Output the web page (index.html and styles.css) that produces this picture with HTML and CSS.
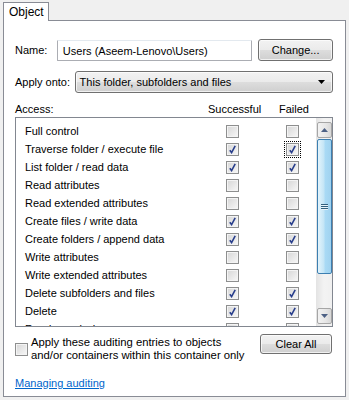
FILE: index.html
```html
<!DOCTYPE html>
<html>
<head>
<meta charset="utf-8">
<link rel="stylesheet" href="styles.css">
</head>
<body>
<div class="tabs"><div class="tab">Object</div></div>
<div class="panel">
  <div class="name-row">
    <span class="label name-label">Name:</span>
    <div class="textbox">Users (Aseem-Lenovo\Users)</div>
    <div class="btn change-btn">Change...</div>
  </div>
  <div class="apply-row">
    <span class="label apply-label">Apply onto:</span>
    <div class="select">
      <span>This folder, subfolders and files</span>
      <svg class="arrow" width="7" height="4" viewBox="0 0 7 4"><path d="M0 0H7L3.5 4Z" fill="#000"/></svg>
    </div>
  </div>
  <div class="access-head">
    <span class="access-label">Access:</span>
    <span class="col-head col-s">Successful</span>
    <span class="col-head col-f">Failed</span>
  </div>
  <div class="listbox">
    <div class="rows">
      <div class="row"><span class="perm">Full control</span><span class="cb"></span><span class="cb"></span></div>
      <div class="row"><span class="perm">Traverse folder / execute file</span><span class="cb on"></span><span class="focus"><span class="cb on"></span></span></div>
      <div class="row"><span class="perm">List folder / read data</span><span class="cb on"></span><span class="cb on"></span></div>
      <div class="row"><span class="perm">Read attributes</span><span class="cb"></span><span class="cb"></span></div>
      <div class="row"><span class="perm">Read extended attributes</span><span class="cb"></span><span class="cb"></span></div>
      <div class="row"><span class="perm">Create files / write data</span><span class="cb on"></span><span class="cb on"></span></div>
      <div class="row"><span class="perm">Create folders / append data</span><span class="cb on"></span><span class="cb on"></span></div>
      <div class="row"><span class="perm">Write attributes</span><span class="cb"></span><span class="cb"></span></div>
      <div class="row"><span class="perm">Write extended attributes</span><span class="cb"></span><span class="cb"></span></div>
      <div class="row"><span class="perm">Delete subfolders and files</span><span class="cb on"></span><span class="cb on"></span></div>
      <div class="row"><span class="perm">Delete</span><span class="cb on"></span><span class="cb on"></span></div>
      <div class="row"><span class="perm">Read permissions</span><span class="cb"></span><span class="cb"></span></div>
    </div>
    <div class="scrollbar">
      <div class="sb-btn"><svg width="7" height="4" viewBox="0 0 7 4"><path d="M0 4H7L3.5 0Z" fill="#4d6185"/></svg></div>
      <div class="sb-track">
        <div class="thumb"><span class="grip"></span><span class="grip"></span><span class="grip"></span></div>
      </div>
      <div class="sb-btn"><svg width="7" height="4" viewBox="0 0 7 4"><path d="M0 0H7L3.5 4Z" fill="#4d6185"/></svg></div>
    </div>
  </div>
  <div class="bottom-row">
    <span class="cb small"></span>
    <span class="apply-text">Apply these auditing entries to objects<br>and/or containers within this container only</span>
    <div class="btn clear-btn">Clear All</div>
  </div>
  <a class="link" href="#">Managing auditing</a>
</div>
</body>
</html>
```
FILE: styles.css
```css
* { box-sizing: border-box; }
html, body { margin: 0; padding: 0; }
body {
  width: 349px;
  height: 400px;
  background: #f0f0f0;
  font-family: "Liberation Sans", Arial, sans-serif;
  font-size: 11px;
  color: #000;
  overflow: hidden;
}
.tabs {
  height: 21px;
  padding-left: 3px;
  display: flex;
  align-items: flex-end;
  position: relative;
  z-index: 1;
}
.tab {
  width: 46px;
  height: 19px;
  background: #fff;
  border: 1px solid #898c95;
  border-bottom: none;
  padding: 2px 0 0 5px;
  line-height: 15px;
  font-size: 12px;
}
.panel {
  margin: -1px 3px 0 3px;
  height: 377px;
  background: #fff;
  border: 1px solid #898c95;
  padding: 18px 12px 0 11px;
}
.name-row, .apply-row {
  display: flex;
  align-items: center;
  white-space: nowrap;
}
.name-label { width: 42px; }
.textbox {
  width: 196px;
  height: 21px;
  border: 1px solid #abadb3;
  border-top-color: #e3e9ef;
  border-radius: 1px;
  padding: 3px 0 0 5px;
  line-height: 14px;
}
.btn {
  height: 22px;
  border: 1px solid #707070;
  border-radius: 3px;
  background: linear-gradient(#f2f2f2 0%, #ebebeb 48%, #dddddd 52%, #cfcfcf 100%);
  box-shadow: inset 0 0 0 1px rgba(255,255,255,0.7);
  display: flex;
  align-items: center;
  justify-content: center;
}
.change-btn { width: 75px; margin-left: 6px; }
.apply-row { margin-top: 10px; }
.apply-label { width: 60px; }
.select {
  width: 260px;
  height: 22px;
  border: 1px solid #707070;
  border-radius: 3px;
  background: linear-gradient(#f2f2f2 0%, #ebebeb 48%, #dddddd 52%, #cfcfcf 100%);
  box-shadow: inset 0 0 0 1px rgba(255,255,255,0.7);
  display: flex;
  align-items: center;
  justify-content: space-between;
  padding: 0 7px 0 4px;
}
.access-head {
  margin-top: 8px;
  height: 16px;
  position: relative;
  line-height: 16px;
}
.col-head { position: absolute; top: 0; }
.col-s { left: 193px; }
.col-f { left: 264px; }
.listbox {
  width: 318px;
  height: 210px;
  border: 1px solid #828790;
  display: flex;
  overflow: hidden;
}
.rows {
  flex: 1;
  padding-top: 4px;
  overflow: hidden;
}
.row {
  height: 18px;
  display: grid;
  grid-template-columns: 200px 61px 40px;
  align-items: center;
  padding-left: 9px;
  white-space: nowrap;
}
.cb {
  width: 13px;
  height: 13px;
  border: 1px solid #8e8f8f;
  background: linear-gradient(135deg, #d6d6d6, #f8f8f8);
  box-shadow: inset 0 0 0 1px #f4f4f4;
  display: block;
  position: relative;
}
.row > .cb:nth-child(2) { margin-left: 1px; }
.cb.on::after {
  content: "";
  position: absolute;
  left: 2px;
  top: 1px;
  width: 7px;
  height: 9px;
  background: url("data:image/svg+xml,%3Csvg xmlns='http://www.w3.org/2000/svg' width='7' height='9' viewBox='0 0 7 9'%3E%3Cpath d='M0.8 5.2 L2.6 7.6 L6.2 0.8' fill='none' stroke='%23293f8c' stroke-width='1.6'/%3E%3C/svg%3E") no-repeat;
}
.focus {
  display: block;
  width: 17px;
  height: 17px;
  outline: 1px dotted #000;
  outline-offset: -1px;
  padding: 2px;
  margin-left: -2px;
}
.scrollbar {
  width: 16px;
  background: linear-gradient(90deg, #e3e3e3, #f3f3f3 50%, #f0f0f0);
  display: flex;
  flex-direction: column;
  padding: 4px 0 2px 1px;
}
.sb-btn {
  height: 16px;
  width: 15px;
  border: 1px solid #a6a6a6;
  border-radius: 2px;
  background: linear-gradient(90deg, #f3f3f3, #e6e6e6 60%, #d8d8d8);
  display: flex;
  align-items: center;
  justify-content: center;
}
.sb-track {
  flex: 1;
  padding: 1px 0;
}
.thumb {
  height: 135px;
  width: 15px;
  border: 1px solid #3c7fb1;
  border-radius: 2px;
  background: linear-gradient(90deg, #e3f4fc, #c4e5f6 45%, #a9daf5 55%, #a0d2ef);
  display: flex;
  flex-direction: column;
  align-items: center;
  justify-content: center;
  gap: 1px;
}
.grip {
  display: block;
  width: 7px;
  height: 1px;
  background: #32617f;
  box-shadow: 0 1px 0 #e8f4fb;
}
.bottom-row {
  margin-top: 7px;
  display: flex;
  align-items: flex-start;
  position: relative;
  height: 36px;
}
.cb.small { margin-top: 9px; }
.apply-text {
  margin-left: 3px;
  margin-top: 2px;
  line-height: 13px;
  font-size: 11.3px;
}
.clear-btn {
  position: absolute;
  right: 1px;
  top: 0;
  width: 72px;
  height: 20px;
}
.link {
  display: inline-block;
  margin-top: 7px;
  color: #0066cc;
  text-decoration: underline;
}
```
